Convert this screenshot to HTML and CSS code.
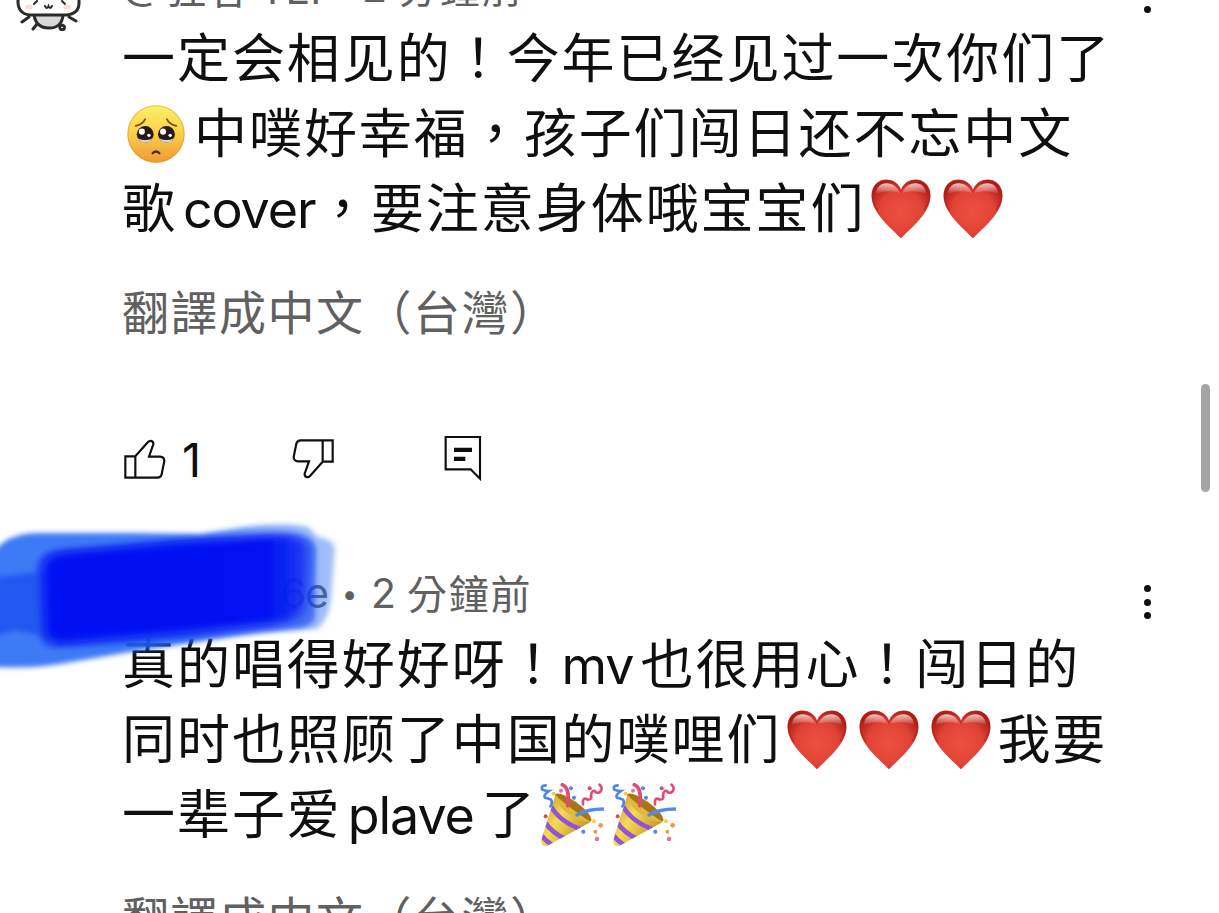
FILE: index.html
```html
<!DOCTYPE html>
<html lang="zh-TW">
<head>
    <meta charset="UTF-8">
    <meta name="viewport" content="width=device-width, initial-scale=1.0">
    <title>留言</title>
    <link rel="stylesheet" href="styles.css">
</head>
<body>
    <svg class="symbols" width="0" height="0">
        <defs>
            <radialGradient id="heart-fill" cx="50%" cy="55%" r="62%">
                <stop offset="0" stop-color="#ee5140"/>
                <stop offset="0.6" stop-color="#e04235"/>
                <stop offset="1" stop-color="#a81812"/>
            </radialGradient>
            <linearGradient id="heart-shine" x1="0" y1="0" x2="0" y2="1">
                <stop offset="0" stop-color="#fff" stop-opacity="0.75"/>
                <stop offset="1" stop-color="#fff" stop-opacity="0"/>
            </linearGradient>
            <linearGradient id="face-fill" x1="0" y1="0" x2="0" y2="1">
                <stop offset="0" stop-color="#fdf06a"/>
                <stop offset="0.45" stop-color="#fbd24b"/>
                <stop offset="1" stop-color="#ee9a35"/>
            </linearGradient>
            <linearGradient id="cone-fill" x1="0" y1="0" x2="1" y2="0.7">
                <stop offset="0" stop-color="#b8861c"/>
                <stop offset="0.45" stop-color="#f6dc55"/>
                <stop offset="1" stop-color="#c08a20"/>
            </linearGradient>
            <clipPath id="cone-clip">
                <path d="M106 72 211 155 80 227Q62 230 62 212z"/>
            </clipPath>
        </defs>
        <symbol id="heart" viewBox="0 0 180 180">
            <path fill="url(#heart-fill)" d="M90 178C62 148 2 104 2 50C2 20 22 2 46 2C68 2 83 15 90 34C97 15 112 2 134 2C158 2 178 20 178 50C178 104 118 148 90 178z"/>
            <path fill="none" stroke="#b81f18" stroke-width="5" opacity="0.6" d="M20 94C8 78 4 66 4 50C4 21 23 4 46 4C68 4 83 17 90 36C97 17 112 4 134 4C157 4 176 21 176 50C176 66 172 78 160 94"/>
            <path fill="url(#heart-shine)" d="M14 46C16 24 30 13 46 13C66 13 78 24 87 42C60 34 32 36 14 46zM166 46C164 24 150 13 134 13C114 13 102 24 93 42C120 34 148 36 166 46z"/>
        </symbol>
        <symbol id="face" viewBox="0 0 172 172">
            <circle cx="86" cy="86" r="85" fill="url(#face-fill)"/>
            <circle cx="86" cy="86" r="83.5" fill="none" stroke="#dd8c2a" stroke-width="3" opacity="0.5"/>
            <path fill="none" stroke="#7a4413" stroke-width="5" stroke-linecap="round" d="M26 62Q46 58 54 42M146 62Q126 58 118 42"/>
            <circle cx="54" cy="87" r="25" fill="#261a14"/>
            <circle cx="117" cy="87" r="25" fill="#261a14"/>
            <path fill="#ccd3d8" d="M33 99Q54 109 75 99Q68 112 54 112Q40 112 33 99zM96 99Q117 109 138 99Q131 112 117 112Q103 112 96 99z"/>
            <g fill="#fff">
                <circle cx="44" cy="79" r="9"/><circle cx="65" cy="90" r="5"/>
                <circle cx="107" cy="79" r="9"/><circle cx="128" cy="90" r="5"/>
            </g>
            <path fill="none" stroke="#4a2a12" stroke-width="7" stroke-linecap="round" d="M76 143Q86 133 96 143"/>
        </symbol>
        <symbol id="popper" viewBox="60 38 190 192">
            <path fill="url(#cone-fill)" d="M106 72 211 155 80 227Q62 230 62 212z"/>
            <g clip-path="url(#cone-clip)" fill="none" stroke="#9353d8" stroke-width="14">
                <path d="M92 108Q120 156 186 178"/>
                <path d="M74 156Q96 188 138 208"/>
                <path d="M62 194Q76 212 98 226"/>
            </g>
            <path fill="#a87418" d="M104 72Q118 62 168 96Q212 128 214 150Q206 160 166 134Q112 98 104 72z"/>
            <path fill="#e0b93c" d="M106 74Q122 92 164 122Q200 148 211 155Q180 156 140 128Q108 104 106 74z"/>
            <g fill="none" stroke-width="8" stroke-linecap="round">
                <path stroke="#4b86e6" d="M76 45Q60 46 66 58Q78 62 86 62Q68 74 74 82Q84 84 92 88Q98 98 90 108"/>
                <path stroke="#e34a72" stroke-width="11" d="M126 43Q150 52 142 106"/>
                <path stroke="#e34a72" d="M238 43Q250 54 238 66Q226 70 224 62Q214 58 212 76Q216 88 202 88Q186 78 188 102"/>
                <path stroke="#4f8eea" stroke-width="10" d="M170 134Q200 116 250 116"/>
            </g>
            <g fill="#4b86e6"><circle cx="152" cy="54" r="6"/><circle cx="161" cy="82" r="6"/><circle cx="189" cy="184" r="6"/></g>
            <g fill="#f4cf3c"><circle cx="100" cy="70" r="6"/><circle cx="221" cy="153" r="6"/></g>
            <g fill="#ee9a45"><circle cx="241" cy="165" r="7"/><circle cx="225" cy="184" r="6"/></g>
            <g fill="#e9729c"><circle cx="122" cy="61" r="6"/><circle cx="230" cy="206" r="7"/></g>
            <g fill="#dc4660"><circle cx="208" cy="54" r="6"/><circle cx="76" cy="138" r="6"/></g>
        </symbol>
        <symbol id="thumb" viewBox="42 54 126 126">
            <path fill="none" stroke="#0f0f0f" stroke-width="6.5" d="M46 109H76V173H46zM76 109 114 66Q119 61 125 63Q131 66 130 73L117 110H150Q163 111 163 123L155 163Q152 173 142 173H76"/>
        </symbol>
        <symbol id="reply" viewBox="1002 42 114 144">
            <path fill="none" stroke="#0f0f0f" stroke-width="6.5" d="M1007 48H1110V173L1082 145H1007z"/>
            <path fill="#0f0f0f" d="M1032 80h54v13h-54zM1032 107h34v13h-34z"/>
        </symbol>
    </svg>

    <div class="page">
        <div class="comment">
            <div class="avatar">
                <svg class="cat" viewBox="0 0 110 100">
                    <g fill="none" stroke="#2b2b2b" stroke-width="3" stroke-linecap="round">
                        <path fill="#d9d9d9" d="M34 84Q36 97 49 97Q62 97 63 84"/>
                        <path fill="#fff" d="M18 60V72Q19 84 32 84H66Q79 83 79 72V60"/>
                        <path d="M29 86 22 91M69 86 76 90M37 93 33 98"/>
                        <path d="M60 94Q66 94 64 98Q59 100 60 95"/>
                        <path stroke-width="2" d="M45 75Q47 79 48.500 75Q50 79 52 75M34 73 37 70M62 70 65 73"/>
                    </g>
                    <g fill="#fbdcd6"><ellipse cx="29" cy="76" rx="4" ry="2.500"/><ellipse cx="67" cy="76" rx="4" ry="2.500"/></g>
                </svg>
            </div>
            <div class="content">
                <div class="meta">
                    <span class="name short"><span class="at">@</span>狂者 TEI</span><span class="dot">•</span><span class="num">2</span><span class="ago">分鐘前</span>
                </div>
                <div class="text">
                    <div class="line">一定会相见的！今年已经见过一次你们了</div>
                    <div class="line"><svg class="emoji face"><use href="#face"/></svg>中噗好幸福，孩子们闯日还不忘中文</div>
                    <div class="line">歌<span class="latin cover">cover</span>，要注意身体哦宝宝们<svg class="emoji"><use href="#heart"/></svg><svg class="emoji"><use href="#heart"/></svg></div>
                </div>
                <div class="translate">翻譯成中文（台灣）</div>
                <div class="actions">
                    <svg class="thumb"><use href="#thumb"/></svg>
                    <span class="count">1</span>
                    <svg class="thumb down"><use href="#thumb"/></svg>
                    <svg class="reply"><use href="#reply"/></svg>
                </div>
            </div>
            <div class="menu"><i></i><i></i><i></i></div>
        </div>

        <div class="comment">
            <div class="avatar"></div>
            <div class="content">
                <div class="meta">
                    <span class="name hidden-name">6e</span><span class="dot">•</span><span class="num">2</span><span class="ago">分鐘前</span>
                </div>
                <div class="text">
                    <div class="line">真的唱得好好呀！<span class="latin mv">mv</span>也很用心！闯日的</div>
                    <div class="line">同时也照顾了中国的噗哩们<svg class="emoji"><use href="#heart"/></svg><svg class="emoji"><use href="#heart"/></svg><svg class="emoji"><use href="#heart"/></svg>我要</div>
                    <div class="line">一辈子爱<span class="latin plave">plave</span>了<svg class="emoji popper first"><use href="#popper"/></svg><svg class="emoji popper"><use href="#popper"/></svg></div>
                </div>
                <div class="translate">翻譯成中文（台灣）</div>
            </div>
            <div class="menu"><i></i><i></i><i></i></div>

            <svg class="scribble" viewBox="0 510 350 180">
                <defs>
                    <filter id="soft" x="-10%" y="-10%" width="120%" height="120%"><feGaussianBlur stdDeviation="2.500"/></filter>
                    <filter id="softer" x="-10%" y="-10%" width="120%" height="120%"><feGaussianBlur stdDeviation="4"/></filter>
                    <linearGradient id="light-stroke" gradientUnits="userSpaceOnUse" x1="0" y1="0" x2="340" y2="0">
                        <stop offset="0" stop-color="#2668f4" stop-opacity="0.88"/>
                        <stop offset="0.55" stop-color="#2668f4" stop-opacity="0.88"/>
                        <stop offset="0.8" stop-color="#2668f4" stop-opacity="0.55"/>
                        <stop offset="1" stop-color="#2668f4" stop-opacity="0.4"/>
                    </linearGradient>
                    <linearGradient id="dark-stroke" gradientUnits="userSpaceOnUse" x1="0" y1="0" x2="320" y2="0">
                        <stop offset="0" stop-color="#000af4"/>
                        <stop offset="0.82" stop-color="#000af4"/>
                        <stop offset="0.93" stop-color="#0a24f2" stop-opacity="0.85"/>
                        <stop offset="1" stop-color="#1040f2" stop-opacity="0.5"/>
                    </linearGradient>
                </defs>
                <path filter="url(#soft)" fill="url(#light-stroke)" d="M-10 556Q2 540 14 537Q24 533 40 533L130 533 200 534 245 527Q290 522 308 527L318 537Q334 539 335 549L331 600Q328 622 316 629L260 633 190 643 130 652 60 664Q30 669 -10 667z"/>
                <path filter="url(#soft)" fill="#1448ee" opacity="0.7" d="M-10 578 15 575 60 570V640L15 630-10 637z"/>
                <path filter="url(#soft)" fill="#1240f0" opacity="0.6" d="M36 565Q42 551 56 550L200 538 280 533Q314 533 316 548L315 618Q312 628 290 629L200 638 60 648Q44 650 40 640z"/>
                <path filter="url(#softer)" fill="url(#dark-stroke)" opacity="0.96" d="M44 564Q48 554 66 552L180 542 270 536Q304 534 309 548L306 604Q302 622 270 624L180 633 64 643Q50 643 46 634z"/>
            </svg>
        </div>
        <div class="scrollbar"></div>
    </div>
</body>
</html>
```
FILE: styles.css
```css
html, body {
    height: 100%;
    margin: 0;
    padding: 0;
    overflow: hidden;
    background-color: #fff;
    color: #0f0f0f;
    font-family: Inter, "Noto Sans CJK TC", sans-serif;
}
.symbols {
    position: absolute;
}
.page {
    position: relative;
    height: 913px;
    overflow: hidden;
}
.comment {
    position: relative;
    display: grid;
    grid-template-columns: 122px 1fr 76px;
    height: 606px;
    white-space: nowrap;
}
.comment:first-child {
    margin-top: -45px;
}
.cat {
    display: block;
    width: 110px;
    height: 100px;
    margin-top: -24px;
}
.meta {
    display: flex;
    align-items: center;
    height: 61px;
    padding-bottom: 2px;
    font-size: 41px;
    color: #606060;
}
.name {
    width: 206px;
}
.short {
    width: 197px;
}
.at {
    position: relative;
    top: -5px;
    margin-right: 4px;
}
.hidden-name {
    padding-top: 3px;
    text-align: right;
    letter-spacing: -1px;
}
.dot {
    width: 43px;
    padding-top: 4px;
    text-align: center;
    font-size: 28px;
}
.num {
    width: 36px;
    padding-top: 2px;
}
.ago {
    font-size: 40px;
    letter-spacing: 1.8px;
}
.line {
    display: flex;
    align-items: baseline;
    height: 75px;
    line-height: 75px;
    font-family: "Noto Sans CJK TC", sans-serif;
    font-size: 53px;
    letter-spacing: 1.95px;
}
.latin {
    font-family: Inter, sans-serif;
    font-size: 52px;
    letter-spacing: -1.1px;
}
.cover {
    width: 133px;
    padding-left: 6px;
}
.mv {
    width: 79px;
}
.plave {
    width: 134px;
    padding-left: 6px;
}
.emoji {
    flex: none;
    align-self: center;
    width: 60px;
    height: 60px;
    margin: 6px 6px 0;
}
.face {
    width: 58px;
    height: 58px;
    margin: 6px 9px 0 5px;
}
.popper {
    width: 64px;
    height: 64px;
    margin: 6px 8px 0 0;
}
.first {
    margin-left: 3px;
}
.translate {
    height: 62px;
    margin-top: 36px;
    line-height: 62px;
    font-family: "Noto Sans CJK TC", sans-serif;
    font-size: 47px;
    letter-spacing: 1.5px;
    color: #606060;
}
.actions {
    display: flex;
    align-items: center;
    height: 60px;
    margin-top: 88px;
}
.thumb {
    width: 42px;
    height: 42px;
    margin-left: 2px;
}
.count {
    width: 108px;
    margin-left: 16px;
    font-size: 47px;
}
.down {
    transform: rotate(180deg);
}
.reply {
    width: 38px;
    height: 48px;
    margin-left: 110px;
}
.menu {
    display: flex;
    flex-direction: column;
    align-items: center;
    gap: 6.500px;
    width: 8px;
    padding-top: 24px;
}
.menu i {
    width: 7px;
    height: 7px;
    border-radius: 50%;
    background-color: #0f0f0f;
}
.scribble {
    position: absolute;
    left: 0;
    top: -51px;
    width: 350px;
    height: 180px;
}
.scrollbar {
    position: absolute;
    left: 1201px;
    top: 384px;
    width: 9px;
    height: 108px;
    border-radius: 5px;
    background-color: #a5a5a5;
}
```
